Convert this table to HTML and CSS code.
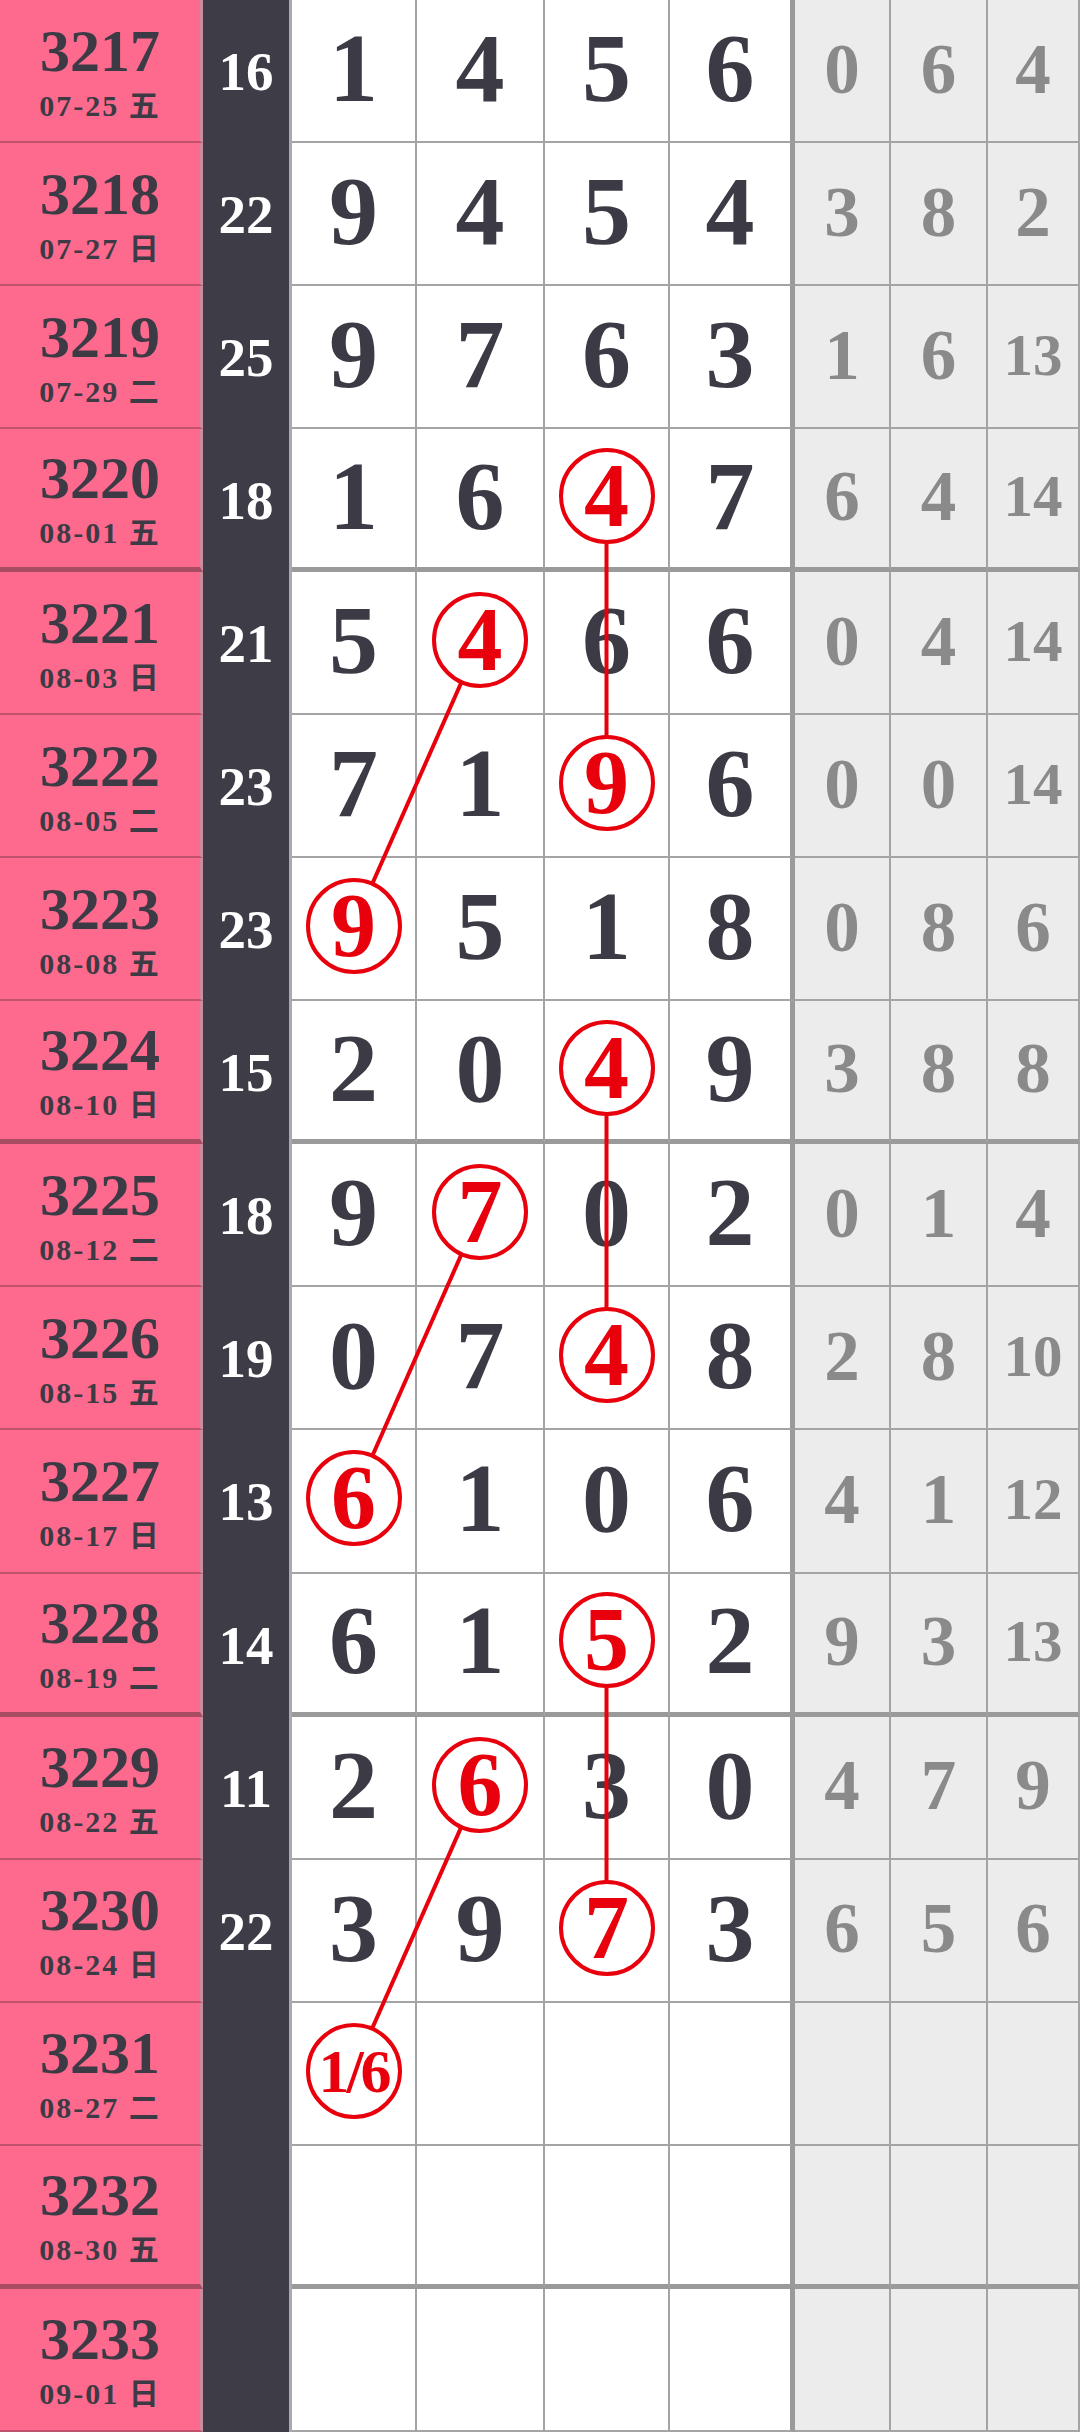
FILE: index.html
```html
<!DOCTYPE html>
<html lang="zh">
<head>
  <meta charset="UTF-8" />
  <meta name="viewport" content="width=device-width, initial-scale=1.0"/>
  <title>走势图</title>
  <link rel="stylesheet" href="styles.css">
</head>
<body>
  <div class="board" id="board">
    <svg class="links" id="links" xmlns="http://www.w3.org/2000/svg"></svg>
  </div>

  <script>
    const board = document.getElementById('board');
    const svg = document.getElementById('links');

    // 期号, 日期, 和值, 开奖号 (括号 = 圈出), 遗漏
    const rows = [
      ['3217', '07-25 五', '16', '1 4 5 6', '0 6 4'],
      ['3218', '07-27 日', '22', '9 4 5 4', '3 8 2'],
      ['3219', '07-29 二', '25', '9 7 6 3', '1 6 13'],
      ['3220', '08-01 五', '18', '1 6 (4) 7', '6 4 14'],
      ['3221', '08-03 日', '21', '5 (4) 6 6', '0 4 14'],
      ['3222', '08-05 二', '23', '7 1 (9) 6', '0 0 14'],
      ['3223', '08-08 五', '23', '(9) 5 1 8', '0 8 6'],
      ['3224', '08-10 日', '15', '2 0 (4) 9', '3 8 8'],
      ['3225', '08-12 二', '18', '9 (7) 0 2', '0 1 4'],
      ['3226', '08-15 五', '19', '0 7 (4) 8', '2 8 10'],
      ['3227', '08-17 日', '13', '(6) 1 0 6', '4 1 12'],
      ['3228', '08-19 二', '14', '6 1 (5) 2', '9 3 13'],
      ['3229', '08-22 五', '11', '2 (6) 3 0', '4 7 9'],
      ['3230', '08-24 日', '22', '3 9 (7) 3', '6 5 6'],
      ['3231', '08-27 二', '', '(1/6)', ''],
      ['3232', '08-30 五', '', '', ''],
      ['3233', '09-01 日', '', '', '']
    ];

    // 连线: [行, 列] -> [行, 列]
    const pairs = [
      [[4, 1], [6, 0]],
      [[3, 2], [5, 2]],
      [[7, 2], [9, 2]],
      [[8, 1], [10, 0]],
      [[11, 2], [13, 2]],
      [[12, 1], [14, 0]]
    ];

    const addCell = (cls, html) => {
      const cell = document.createElement('div');
      cell.className = cls;
      cell.innerHTML = html;
      board.appendChild(cell);
      return cell;
    };

    const pad = (str, n) => {
      const list = str ? str.split(' ') : [];
      while (list.length < n) list.push('');
      return list;
    };

    rows.forEach((r, i) => {
      const sep = i % 4 === 3 ? ' sep' : '';
      addCell('cell issue' + sep, `<b class="no">${r[0]}</b><span class="date">${r[1]}</span>`);
      addCell('cell sum' + sep, r[2]);

      pad(r[3], 4).forEach((n, j) => {
        let html = n;
        if (n.startsWith('(')) {
          const v = n.slice(1, -1);
          html = `<span class="hit${v.length > 1 ? ' small' : ''}" id="hit-${i}-${j}">${v}</span>`;
        }
        addCell('cell num' + sep + (j === 3 ? ' last' : ''), html);
      });

      pad(r[4], 3).forEach(m => {
        addCell('cell miss' + sep + (m.length > 1 ? ' two' : ''), m);
      });
    });

    const center = (el) => {
      const b = board.getBoundingClientRect();
      const r = el.getBoundingClientRect();
      return [r.left - b.left + r.width / 2, r.top - b.top + r.height / 2];
    };

    pairs.forEach(([a, b]) => {
      const p1 = center(document.getElementById(`hit-${a[0]}-${a[1]}`));
      const p2 = center(document.getElementById(`hit-${b[0]}-${b[1]}`));
      const line = document.createElementNS('http://www.w3.org/2000/svg', 'line');
      line.setAttribute('x1', p1[0]);
      line.setAttribute('y1', p1[1]);
      line.setAttribute('x2', p2[0]);
      line.setAttribute('y2', p2[1]);
      svg.appendChild(line);
    });
  </script>
</body>
</html>
```

FILE: styles.css
```css
body {
  margin: 0;
  background-color: #fff;
  font-family: 'Liberation Serif', 'Noto Sans CJK SC', serif;
  font-weight: bold;
}
.board {
  position: relative;
  width: 1080px;
  height: 2432px;
  overflow: hidden;
  display: grid;
  grid-template-columns: 203px 89px 125px 128px 125px 125px 96px 97px 1fr;
  grid-auto-rows: calc(2432px / 17);
}
.links {
  position: absolute;
  left: 0;
  top: 0;
  width: 100%;
  height: 100%;
  z-index: 1;
  pointer-events: none;
}
.links line {
  stroke: #e8000c;
  stroke-width: 4;
}
.cell {
  box-sizing: border-box;
  display: flex;
  justify-content: center;
  align-items: center;
  line-height: 1;
  border-right: 2px solid #a4a4a4;
  border-bottom: 2px solid #a4a4a4;
}
.cell.sep {
  border-bottom: 5px solid #9a9a9a;
}
.issue {
  flex-direction: column;
  gap: 10px;
  background-color: #fd6a8d;
  color: #3c3b45;
  border-right: 3px solid #c98d9d;
  border-bottom-color: #bf526c;
}
.issue.sep {
  border-bottom-color: #a84c63;
}
.issue .no {
  font-size: 60px;
}
.issue .date {
  font-size: 30px;
  letter-spacing: 2px;
}
.sum {
  background-color: #3e3d47;
  color: #fff;
  font-size: 55px;
  border-right: 3px solid #aaa;
  border-bottom: none;
}
.sum.sep {
  border-bottom: none;
}
.num {
  background-color: #fff;
  color: #3c3b45;
  font-size: 98px;
  padding-bottom: 5px;
}
.num.last {
  border-right: 5px solid #9a9a9a;
}
.miss {
  background-color: #ececec;
  color: #8a8a8a;
  font-size: 71px;
  padding-bottom: 3px;
}
.miss.two {
  font-size: 59px;
}
.hit {
  position: relative;
  z-index: 2;
  box-sizing: border-box;
  width: 96px;
  height: 96px;
  display: flex;
  justify-content: center;
  align-items: center;
  border: 4px solid #e8000c;
  border-radius: 50%;
  background-color: #fff;
  color: #e8000c;
  font-size: 90px;
}
.hit.small {
  font-size: 62px;
  letter-spacing: -3px;
}
```
